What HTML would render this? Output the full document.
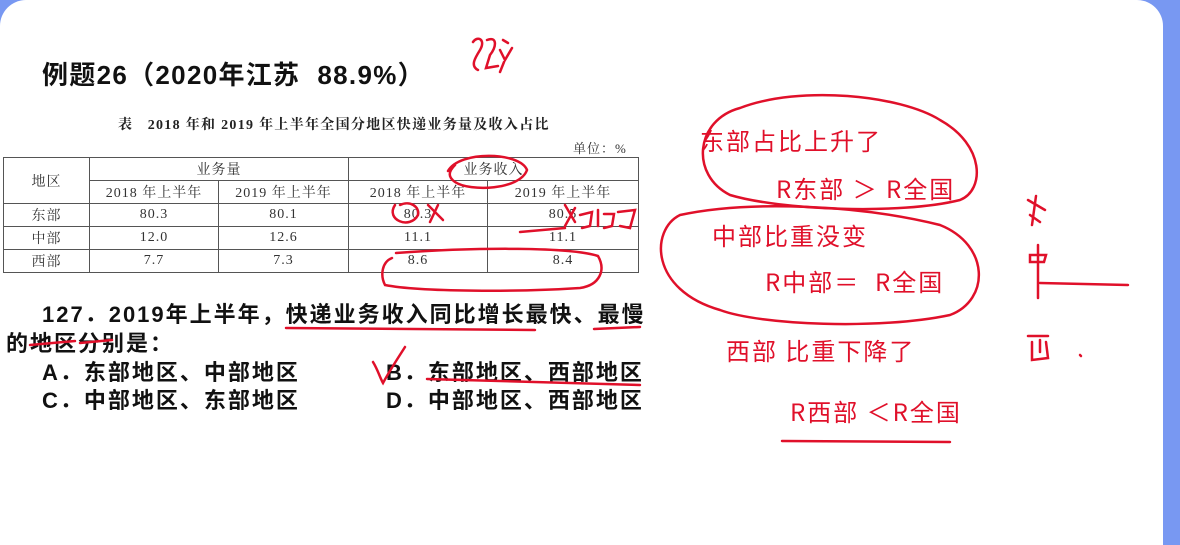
<!DOCTYPE html>
<html><head><meta charset="utf-8"><style>
html,body{margin:0;padding:0;}
body{width:1180px;height:545px;background:#7898f2;position:relative;overflow:hidden;font-family:"Liberation Sans","Noto Sans CJK SC",sans-serif;}
.panel{position:absolute;left:0;top:0;width:1163px;height:545px;background:#fff;border-radius:26px 26px 0 0;}
.t{position:absolute;white-space:nowrap;}
.serif{font-family:"Liberation Serif","Noto Serif CJK SC",serif;}
table{position:absolute;left:3px;top:157px;border-collapse:collapse;font-family:"Liberation Serif","Noto Serif CJK SC",serif;font-size:14px;letter-spacing:1px;color:#333;}
td{border:1px solid #555;text-align:center;padding:0;height:22px;}
.q{font-weight:bold;font-size:22px;letter-spacing:2px;color:#111;}
.r{color:#e0102a;font-size:24px;letter-spacing:2px;font-family:"Noto Sans CJK SC",sans-serif;}
</style></head><body>
<div class="panel"></div>
<div class="t" style="left:42px;top:55px;font-size:26px;letter-spacing:1.3px;font-weight:bold;color:#111;">例题26（2020年江苏&nbsp; 88.9%）</div>
<div class="t serif" style="left:118px;top:114px;font-size:14px;letter-spacing:1.3px;font-weight:bold;color:#222;">表&nbsp;&nbsp; 2018 年和 2019 年上半年全国分地区快递业务量及收入占比</div>
<div class="t serif" style="left:573px;top:138px;font-size:13px;letter-spacing:1px;color:#333;">单位：%</div>
<table>
<tr><td rowspan="2" style="width:85px">地区</td><td colspan="2">业务量</td><td colspan="2">业务收入</td></tr>
<tr><td style="width:128px">2018 年上半年</td><td style="width:129px">2019 年上半年</td><td style="width:138px">2018 年上半年</td><td style="width:150px">2019 年上半年</td></tr>
<tr><td>东部</td><td>80.3</td><td>80.1</td><td>80.3</td><td>80.5</td></tr>
<tr><td>中部</td><td>12.0</td><td>12.6</td><td>11.1</td><td>11.1</td></tr>
<tr><td>西部</td><td>7.7</td><td>7.3</td><td>8.6</td><td>8.4</td></tr>
</table>
<div class="t q" style="left:42px;top:297px;">127．2019年上半年，快递业务收入同比增长最快、最慢</div>
<div class="t q" style="left:6px;top:326px;">的地区分别是：</div>
<div class="t q" style="left:42px;top:355px;">A．东部地区、中部地区</div>
<div class="t q" style="left:386px;top:355px;">B．东部地区、西部地区</div>
<div class="t q" style="left:42px;top:383px;">C．中部地区、东部地区</div>
<div class="t q" style="left:386px;top:383px;">D．中部地区、西部地区</div>

<div class="t r" style="left:700px;top:122px;">东部占比上升了</div>
<div class="t r" style="left:776px;top:170px;">R东部 ＞ R全国</div>
<div class="t r" style="left:712px;top:217px;">中部比重没变</div>
<div class="t r" style="left:765px;top:263px;">R中部＝&nbsp; R全国</div>
<div class="t r" style="left:726px;top:332px;">西部 比重下降了</div>
<div class="t r" style="left:790px;top:393px;">R西部 ＜R全国</div>

<svg width="1180" height="545" style="position:absolute;left:0;top:0" fill="none" stroke="#e0102a" stroke-width="2.5" stroke-linecap="round">
<path d="M740 108 C800 85 900 95 940 120 C985 145 985 190 960 200 C900 215 780 210 730 195 C690 175 695 120 740 108"/>
<path d="M680 215 C750 200 860 205 940 225 C990 245 990 300 950 315 C880 330 760 325 720 310 C650 290 650 230 680 215"/>
<path d="M782 441 L950 442"/>
<path d="M1028 200 L1045 210 M1036 196 L1032 225 M1030 215 L1040 222"/>
<path d="M1030 255 L1046 255 L1044 262 L1030 262 Z M1038 245 L1038 298 M1040 283 L1128 285"/>
<path d="M1028 336 L1048 336 M1032 342 L1032 360 L1048 358 L1046 342 M1040 340 L1040 352"/>
<path d="M1080 355 L1081 356"/>
<path d="M473 42 C478 35 486 40 480 50 C475 58 470 66 478 70 M487 40 C497 36 497 46 490 55 L486 68 L498 66 M503 40 L508 43 M500 50 L505 60 L512 48 M504 62 L500 72"/>
<path d="M448 171 C460 150 520 152 527 170 C520 190 470 192 455 182 C448 177 448 172 455 165"/>
<path d="M395 205 C385 220 410 230 418 215 C420 207 410 200 400 205 M428 205 L443 220 M438 205 L430 222"/>
<path d="M520 232 L565 228 M565 205 L575 222 M575 208 L565 226 M580 215 L592 212 L590 226 L582 228 M598 210 L598 226 M604 214 L614 214 L612 226 L604 228 M618 212 L635 210 L630 228 L620 226"/>
<path d="M396 253 C480 247 570 247 598 256 C606 270 600 285 580 288 C520 292 420 292 385 285 C380 275 382 262 392 258"/>
<path d="M286 328 L535 330 M594 329 L640 327 M30 345 L75 341 M80 343 L112 340"/>
<path d="M427 379 L640 385"/>
<path d="M373 362 C378 370 380 378 383 383 C390 370 398 358 405 347"/>
</svg>
</body></html>
